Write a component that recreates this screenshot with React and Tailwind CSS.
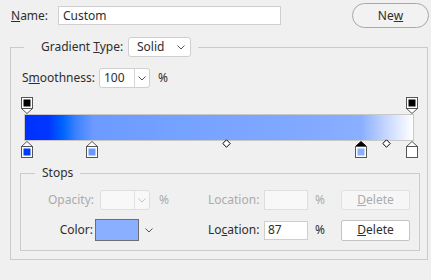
import React from "react";

function Chevron({ color = "#555" }) {
  return (
    <svg width="8" height="5" viewBox="0 0 8 5" className="block">
      <path d="M0.5 0.5 L4 4 L7.5 0.5" fill="none" stroke={color} strokeWidth="1" />
    </svg>
  );
}

function TopStop({ left }) {
  return (
    <svg width="12" height="17" viewBox="0 0 12 17" className="absolute top-0" style={{ left }}>
      <path d="M0.5 11.5 L6 16.5 L11.5 11.5 Z" fill="#fff" stroke="#555" />
      <rect x="0.5" y="0.5" width="11" height="11" fill="#fff" stroke="#555" />
      <rect x="2.5" y="2.5" width="7" height="7" fill="#000" />
    </svg>
  );
}

function BottomStop({ left, color, selected }) {
  return (
    <svg width="12" height="17" viewBox="0 0 12 17" className="absolute top-[44px]" style={{ left }}>
      <path d="M0.5 5.5 L6 0.5 L11.5 5.5 Z" fill={selected ? "#000" : "#fff"} stroke={selected ? "#000" : "#555"} />
      <rect x="0.5" y="5.5" width="11" height="11" fill="#fff" stroke="#555" />
      <rect x="2.5" y="7.5" width="7" height="7" fill={color} />
    </svg>
  );
}

function Diamond({ left }) {
  return (
    <svg width="9" height="9" viewBox="0 0 9 9" className="absolute top-[42px]" style={{ left }}>
      <path d="M4.5 0.8 L8.2 4.5 L4.5 8.2 L0.8 4.5 Z" fill="#fff" stroke="#000" />
    </svg>
  );
}

export default function App() {
  return (
    <div className="w-[431px] h-[280px] bg-[#f0f0f0] font-['Noto_Sans',sans-serif] text-[12px] text-[#2e2e2e] leading-none overflow-hidden">
      {/* Name row */}
      <div className="flex items-center pt-[3px] h-[28px]">
        <span className="ml-[11px] w-[47px]"><span className="underline">N</span>ame:</span>
        <div className="w-[223px] h-[19px] bg-white border border-[#cfcfcf] flex items-center pl-[4px]">Custom</div>
        <div className="ml-auto mr-[2px] w-[77px] h-[25px] rounded-full border border-[#a8a8a8] bg-[#f2f2f2] flex items-center justify-center">
          Ne<span className="underline">w</span>
        </div>
      </div>

      {/* Outer group */}
      <fieldset className="ml-[10px] mt-[9px] w-[418px] h-[223px] border border-[#cacaca]">
        <legend className="ml-[13px] pl-[17px] pr-[7px] h-[20px]">
          <div className="flex items-center h-[20px]">
            <span className="w-[87px]">Gradient <span className="underline">T</span>ype:</span>
            <div className="w-[63px] h-[20px] bg-white border border-[#cfcfcf] rounded-[3px] flex items-center pl-[8px] pr-[5px]">
              <span>Solid</span>
              <span className="ml-auto"><Chevron /></span>
            </div>
          </div>
        </legend>

        {/* Smoothness */}
        <div className="flex items-center mt-[11px] ml-[11px] h-[20px]">
          <span className="w-[77px]">S<span className="underline">m</span>oothness:</span>
          <div className="w-[51px] h-[20px] bg-white border border-[#cfcfcf] rounded-[3px] flex items-center">
            <span className="pl-[4px] w-[34px]">100</span>
            <div className="h-full border-l border-[#d6d6d6] flex-1 flex items-center justify-center"><Chevron /></div>
          </div>
          <span className="ml-[8px]">%</span>
        </div>

        {/* Gradient strip */}
        <div className="relative ml-[13px] mt-[9px] w-[390px] h-[61px]">
          <TopStop left={-3} />
          <TopStop left={382} />
          <div className="absolute top-[17px] left-0 w-[390px] h-[27px] border border-[#c8c8c8] bg-[linear-gradient(to_right,#0030ff_0%,#0036ff_6%,#0066ff_10%,#3a80ff_13%,#6c9aff_17.5%,#76a2ff_40%,#80a8ff_70%,#8aafff_86.6%,#c6d6ff_93%,#ffffff_100%)]" />
          <BottomStop left={-3} color="#0039ff" />
          <BottomStop left={62} color="#6a98ff" />
          <BottomStop left={331} color="#8aafff" selected />
          <BottomStop left={382} color="#ffffff" />
          <Diamond left={198} />
          <Diamond left={358} />
        </div>

        {/* Stops group */}
        <fieldset className="ml-[9px] mt-[7px] w-[400px] h-[86px] border border-[#cacaca]">
          <legend className="ml-[14px] px-[7px] h-[16px] flex items-center text-[#2e2e2e]">Stops</legend>

          <div className="flex items-center mt-[9px] h-[20px] text-[#ababab]">
            <span className="w-[79px] text-right pr-[6px]">Opacity:</span>
            <div className="w-[50px] h-[20px] bg-[#f8f8f8] border border-[#dedede] rounded-[3px] flex items-center">
              <span className="w-[33px]"></span>
              <div className="h-full border-l border-[#e2e2e2] flex-1 flex items-center justify-center"><Chevron color="#c4c4c4" /></div>
            </div>
            <span className="ml-[9px] w-[11px]">%</span>
            <span className="ml-[38px] w-[56px]">Location:</span>
            <div className="w-[44px] h-[20px] bg-[#f8f8f8] border border-[#dedede]"></div>
            <span className="ml-[7px] w-[12px]">%</span>
            <div className="ml-[14px] w-[69px] h-[20px] bg-[#f6f6f6] border border-[#e0e0e0] rounded-[2px] flex items-center justify-center">
              <span><span className="underline">D</span>elete</span>
            </div>
          </div>

          <div className="flex items-center mt-[9px] h-[22px]">
            <span className="w-[74px] text-right pr-[2px]">Color:</span>
            <div className="w-[44px] h-[22px] bg-[#8aafff] border border-[#6e6e6e]"></div>
            <span className="ml-[6px] w-[8px]"><Chevron /></span>
            <span className="ml-[55px] w-[56px]">Lo<span className="underline">c</span>ation:</span>
            <div className="w-[44px] h-[19px] bg-white border border-[#cfcfcf] flex items-center pl-[3px]">87</div>
            <span className="ml-[7px] w-[12px]">%</span>
            <div className="ml-[14px] w-[69px] h-[21px] bg-white border border-[#c4c4c4] rounded-[2px] flex items-center justify-center">
              <span><span className="underline">D</span>elete</span>
            </div>
          </div>
        </fieldset>
      </fieldset>
    </div>
  );
}
